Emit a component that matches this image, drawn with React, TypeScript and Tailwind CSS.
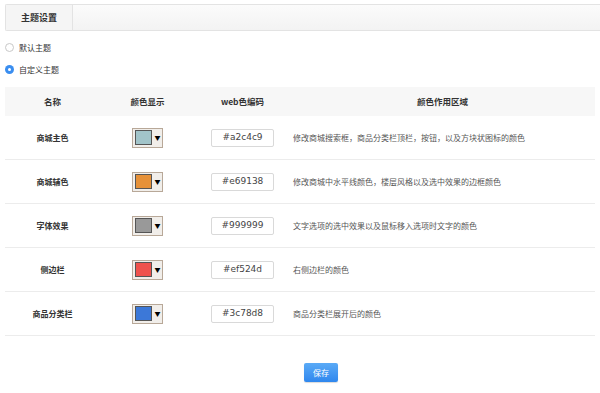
import { useState } from "react"

const rows = [
  { name: "商城主色", color: "#a2c4c9", desc: "修改商城搜索框，商品分类栏顶栏，按钮，以及方块状图标的颜色" },
  { name: "商城辅色", color: "#e69138", desc: "修改商城中水平线颜色，楼层风格以及选中效果的边框颜色" },
  { name: "字体效果", color: "#999999", desc: "文字选项的选中效果以及鼠标移入选项时文字的颜色" },
  { name: "侧边栏", color: "#ef524d", desc: "右侧边栏的颜色" },
  { name: "商品分类栏", color: "#3c78d8", desc: "商品分类栏展开后的颜色" },
]

export default function App() {
  const [theme, setTheme] = useState<"default" | "custom">("custom")

  return (
    <div className="w-[600px] h-[393px] bg-white overflow-hidden pl-[5px] pt-[4px] font-['Noto_Sans_CJK_SC',sans-serif] text-[8px] text-[#333]">
      {/* tab bar */}
      <div className="flex h-[27px] border border-r-0 border-[#e3e3e3] rounded-l-[2px] bg-gradient-to-b from-[#fbfbfb] to-[#f3f3f3]">
        <div className="w-[67px] flex items-center justify-center border-r border-[#e3e3e3] bg-[#f5f5f5] text-[9px] font-bold text-[#333]">
          主题设置
        </div>
      </div>

      {/* radios */}
      <div className="flex flex-col gap-[13px] mt-[12px]">
        <label className="flex items-center gap-[5px] h-[9px]" onClick={() => setTheme("default")}>
          <span
            className={
              theme === "default"
                ? "w-[9px] h-[9px] rounded-full bg-[#3a8ef0] flex items-center justify-center"
                : "w-[9px] h-[9px] rounded-full border border-[#c8c8c8] bg-white"
            }
          >
            {theme === "default" && <span className="w-[3px] h-[3px] rounded-full bg-white" />}
          </span>
          <span>默认主题</span>
        </label>
        <label className="flex items-center gap-[5px] h-[9px]" onClick={() => setTheme("custom")}>
          <span
            className={
              theme === "custom"
                ? "w-[9px] h-[9px] rounded-full bg-[#3a8ef0] flex items-center justify-center"
                : "w-[9px] h-[9px] rounded-full border border-[#c8c8c8] bg-white"
            }
          >
            {theme === "custom" && <span className="w-[3px] h-[3px] rounded-full bg-white" />}
          </span>
          <span>自定义主题</span>
        </label>
      </div>

      {/* table */}
      <div className="mt-[13px] w-[590px]">
        <div className="grid grid-cols-[95px_95px_95px_1fr] h-[29px] items-center bg-[#f7f7f7] font-bold text-[8.5px] text-[#333]">
          <div className="text-center">名称</div>
          <div className="text-center">颜色显示</div>
          <div className="text-center">web色编码</div>
          <div className="text-center">颜色作用区域</div>
        </div>
        {rows.map((r) => (
          <div
            key={r.name}
            className="grid grid-cols-[95px_95px_95px_1fr] h-[44px] items-center border-b border-[#ececec]"
          >
            <div className="text-center font-bold text-[8px] text-[#333]">{r.name}</div>
            <div className="flex justify-center">
              <div className="w-[31px] h-[20px] ml-[-1px] border border-[#b8a898] bg-[#f1eeea] flex items-center pl-[2px] gap-[3px]">
                <span className="w-[17px] h-[15px] border border-[#555]" style={{ background: r.color }} />
                <span className="text-[6px] leading-none text-black">▼</span>
              </div>
            </div>
            <div className="flex justify-center">
              <div className="w-[63px] h-[18px] border border-[#d9d9d9] rounded-[2px] bg-white flex items-center justify-center text-[9px] text-[#444] font-['DejaVu_Sans',sans-serif]">
                {r.color}
              </div>
            </div>
            <div className="pl-[3px] text-[8px] text-[#555]">{r.desc}</div>
          </div>
        ))}
      </div>

      {/* save */}
      <div className="flex justify-center mt-[27px] w-[590px]">
        <button className="w-[34px] h-[19px] ml-[42px] rounded-[2px] bg-gradient-to-b from-[#5aaaf6] to-[#2f87ee] text-white text-[8px] shadow-[0_1px_1px_rgba(0,0,0,0.15)]">
          保存
        </button>
      </div>
    </div>
  )
}
